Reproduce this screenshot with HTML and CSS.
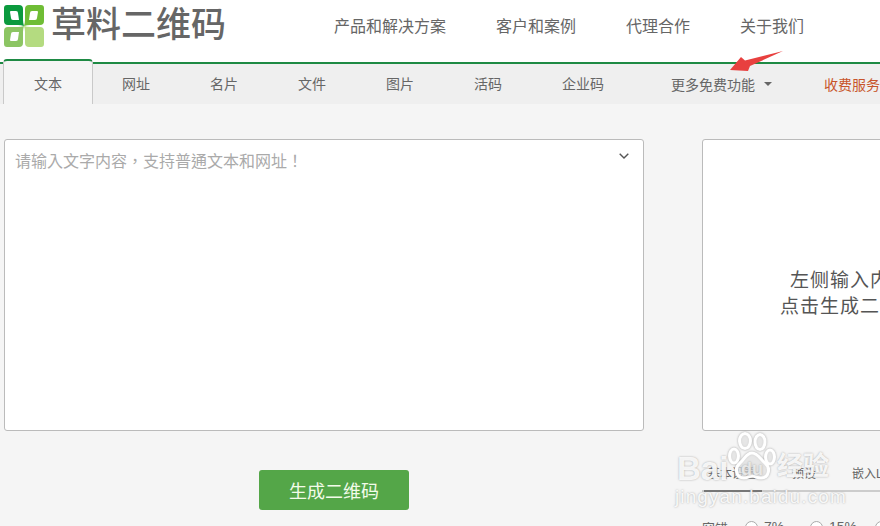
FILE: index.html
```html
<!DOCTYPE html>
<html lang="zh">
<head>
<meta charset="utf-8">
<title>草料二维码</title>
<link rel="stylesheet" href="styles.css">
</head>
<body>
<div class="page">
  <header class="top">
    <div class="brand">
      <svg class="logo" viewBox="0 0 40 42" width="40" height="42">
        <path d="M3 0h12q4 0 4 4v11q0 3 1 6-3-1-6-1H4q-4 0-4-4V3q0-3 3-3z" fill="#0b9a3e"/>
        <path d="M37 0H25q-4 0-4 4v11q0 3-1 6 3-1 6-1h10q4 0 4-4V3q0-3-3-3z" fill="#6fbd35"/>
        <path d="M3 42h12q4 0 4-4V27q0-3 1-6-3 1-6 1H4q-4 0-4 4v13q0 3 3 3z" fill="#8cc563"/>
        <path d="M37 42H25q-4 0-4-4V27q0-3-1-6 3 1 6 1h10q4 0 4 4v13q0 3-3 3z" fill="#b4db80"/>
        <path d="M7 6h5q2 0 2 2l1 7H9q-2 0-2-2l-1-6q0-1 1-1z" fill="#fff"/>
        <path d="M33 6h-5q-2 0-2 2l-1 7h6q2 0 2-2l1-6q0-1-1-1z" fill="#fff"/>
        <path d="M7 36h5q2 0 2-2l1-7H9q-2 0-2 2l-1 6q0 1 1 1z" fill="#fff"/>
      </svg>
      <span class="brand-name">草料二维码</span>
    </div>
    <nav class="main-nav">
      <a class="nav-link">产品和解决方案</a>
      <a class="nav-link">客户和案例</a>
      <a class="nav-link">代理合作</a>
      <a class="nav-link">关于我们</a>
    </nav>
  </header>

  <div class="tabs">
    <a class="tab tab-active">文本</a>
    <a class="tab">网址</a>
    <a class="tab">名片</a>
    <a class="tab">文件</a>
    <a class="tab">图片</a>
    <a class="tab">活码</a>
    <a class="tab tab-wide">企业码</a>
    <a class="tab-more">更多免费功能<i class="caret"></i></a>
    <a class="tab-paid">收费服务</a>
  </div>

  <main class="content">
    <section class="left">
      <div class="editor">
        <span class="placeholder" lang="zh-Hant">请输入文字内容，支持普通文本和网址！</span>
        <svg class="chevron" viewBox="0 0 10 6" width="10" height="6"><path d="M.7.7 5 5 9.3.7" fill="none" stroke="#555" stroke-width="1.4"/></svg>
      </div>
      <div class="actions"><button class="generate">生成二维码</button></div>
    </section>
    <section class="right">
      <div class="preview">
        <p class="preview-text">左侧输入内容<br>点击生成二维码</p>
      </div>
      <div class="subtabs">
        <span class="subtab subtab-first">基本设置</span>
        <span class="subtab subtab-second">预设</span>
        <span class="subtab">嵌入Logo</span>
      </div>
      <div class="options">
        <span class="opt-label">容错</span>
        <i class="radio"></i><span class="opt-text">7%</span>
        <i class="radio"></i><span class="opt-text">15%</span>
        <i class="radio"></i>
      </div>
    </section>
  </main>

  <svg class="arrow" viewBox="0 0 60 24" width="60" height="24">
    <path d="M3 20 14 7l4 3.500L56 1 23 16l-2 5z" fill="#e8403f"/>
  </svg>

  <div class="watermark">
    <svg class="wm-paw" viewBox="0 0 48 48" width="48" height="48">
      <g fill="#fff" fill-opacity=".5" stroke="#fff" stroke-width="3">
        <ellipse cx="6" cy="24" rx="4.500" ry="7"/>
        <ellipse cx="17" cy="9" rx="5.500" ry="7.500"/>
        <ellipse cx="32" cy="10" rx="5" ry="7.500"/>
        <ellipse cx="42" cy="25" rx="4.500" ry="7"/>
        <path d="M24 21c-6 0-7 6-12 10-6 5-4 15 4 15 4 0 5-2 8-2s5 2 9 2c8 0 10-10 4-15-5-4-7-10-13-10z"/>
      </g>
    </svg>
    <span class="wm-bai">Bai</span>
    <span class="wm-du">du</span>
    <span class="wm-jy">经验</span>
    <span class="wm-url">jingyan.baidu.com</span>
  </div>
</div>
</body>
</html>
```

FILE: styles.css
```css
* { box-sizing: border-box; }
html, body { margin: 0; padding: 0; }
body {
  background: #f5f5f5;
  font-family: "Liberation Sans", "Noto Sans CJK SC", sans-serif;
  color: #666;
}
.page {
  position: relative;
  width: 880px;
  height: 526px;
  overflow: hidden;
}
.top {
  display: flex;
  align-items: center;
  height: 64px;
  background: #fff;
  border-bottom: 2px solid #1e8a44;
}
.brand {
  display: flex;
  align-items: center;
  width: 334px;
  flex: none;
  padding: 0 0 12px 4px;
}
.logo { flex: none; margin-top: 2px; }
.brand-name {
  margin-left: 7px;
  font-size: 35px;
  line-height: 50px;
  color: #666;
  font-weight: 500;
  white-space: nowrap;
}
.main-nav {
  display: flex;
  gap: 50px;
  padding-bottom: 8px;
  white-space: nowrap;
}
.nav-link { font-size: 16px; line-height: 28px; color: #666; }

.tabs {
  display: flex;
  align-items: center;
  height: 40px;
  padding-left: 3px;
  background: #efefef;
  font-size: 14px;
  white-space: nowrap;
}
.tab {
  flex: none;
  width: 88px;
  text-align: center;
  line-height: 40px;
  color: #666;
}
.tab-active {
  width: 90px;
  height: 45px;
  margin-top: -5px;
  padding-top: 3px;
  background: #f5f5f5;
  border: 1px solid #c9c9c9;
  border-top: 2px solid #1e8a44;
  border-bottom: 0;
  border-radius: 4px 4px 0 0;
  margin-right: -1px;
}
.tab-wide { width: 102px; }
.tab-more {
  flex: none;
  margin-left: 37px;
  display: flex;
  align-items: center;
  color: #666;
}
.caret {
  margin-left: 9px;
  width: 0;
  height: 0;
  border-left: 4px solid transparent;
  border-right: 4px solid transparent;
  border-top: 4px solid #666;
}
.tab-paid { flex: none; margin-left: 52px; color: #c8552b; }

.content {
  display: flex;
  gap: 58px;
  padding: 35px 0 0 4px;
}
.left { flex: none; width: 640px; }
.editor {
  position: relative;
  height: 292px;
  background: #fff;
  border: 1px solid #bbb;
  border-radius: 3px;
  padding: 10px 10px;
}
.placeholder {
  display: block;
  margin-top: -1px;
  font-family: "Noto Sans CJK TC", sans-serif;
  font-size: 16px;
  line-height: 22px;
  color: #aaa;
}
.chevron { position: absolute; right: 14px; top: 13px; }
.actions { display: flex; margin-top: 39px; padding-left: 255px; }
.generate {
  width: 150px;
  height: 40px;
  border: 0;
  border-radius: 3px;
  background: #54a648;
  color: #f2fbe9;
  font-family: inherit;
  font-size: 18px;
}
.right { flex: none; width: 296px; }
.preview {
  display: flex;
  align-items: center;
  justify-content: center;
  height: 292px;
  background: #fff;
  border: 1px solid #bbb;
  border-radius: 3px;
  padding-top: 17px;
}
.preview-text {
  margin: 0;
  font-size: 19px;
  line-height: 26px;
  letter-spacing: 1px;
  text-align: center;
  color: #555;
}
.subtabs {
  display: flex;
  height: 43px;
  margin-top: 18px;
  padding-left: 2px;
  border-bottom: 2px solid #ccc;
  font-size: 12px;
  line-height: 50px;
  color: #666;
  white-space: nowrap;
}
.subtab { height: 43px; }
.subtab-first {
  width: 58px;
  margin-right: 30px;
  padding-left: 4px;
  border-bottom: 2px solid #777;
}
.subtab-second { width: 60px; }
.options {
  display: flex;
  align-items: center;
  height: 24px;
  margin-top: 23px;
  font-size: 13px;
  color: #666;
  white-space: nowrap;
}
.opt-label { width: 43px; }
.radio {
  flex: none;
  width: 13px;
  height: 13px;
  border: 1px solid #aaa;
  border-radius: 50%;
  background: #fff;
}
.opt-text { width: 52px; padding-left: 6px; font-size: 14px; }

.arrow { position: absolute; left: 727px; top: 50px; }

.watermark {
  position: absolute;
  left: 675px;
  top: 432px;
  width: 160px;
  height: 74px;
  color: rgba(255, 255, 255, .9);
  text-shadow: 0 0 2px rgba(130, 130, 130, .7);
  white-space: nowrap;
}
.wm-paw {
  position: absolute;
  left: 53px;
  top: 0;
  filter: drop-shadow(0 0 1px rgba(130, 130, 130, .7));
}
.wm-bai, .wm-du, .wm-url { position: absolute; font-family: "Liberation Sans", sans-serif; }
.wm-bai { left: 2px; top: 19px; font-size: 33px; line-height: 35px; font-weight: 700; }
.wm-du { left: 66px; top: 26px; font-size: 18px; line-height: 22px; font-weight: 700; color: rgba(235, 235, 235, .95); }
.wm-jy { position: absolute; left: 102px; top: 19px; font-size: 26px; line-height: 30px; font-weight: 700; }
.wm-url { left: 0; top: 54px; font-size: 19px; line-height: 22px; letter-spacing: 1.100px; }
```
